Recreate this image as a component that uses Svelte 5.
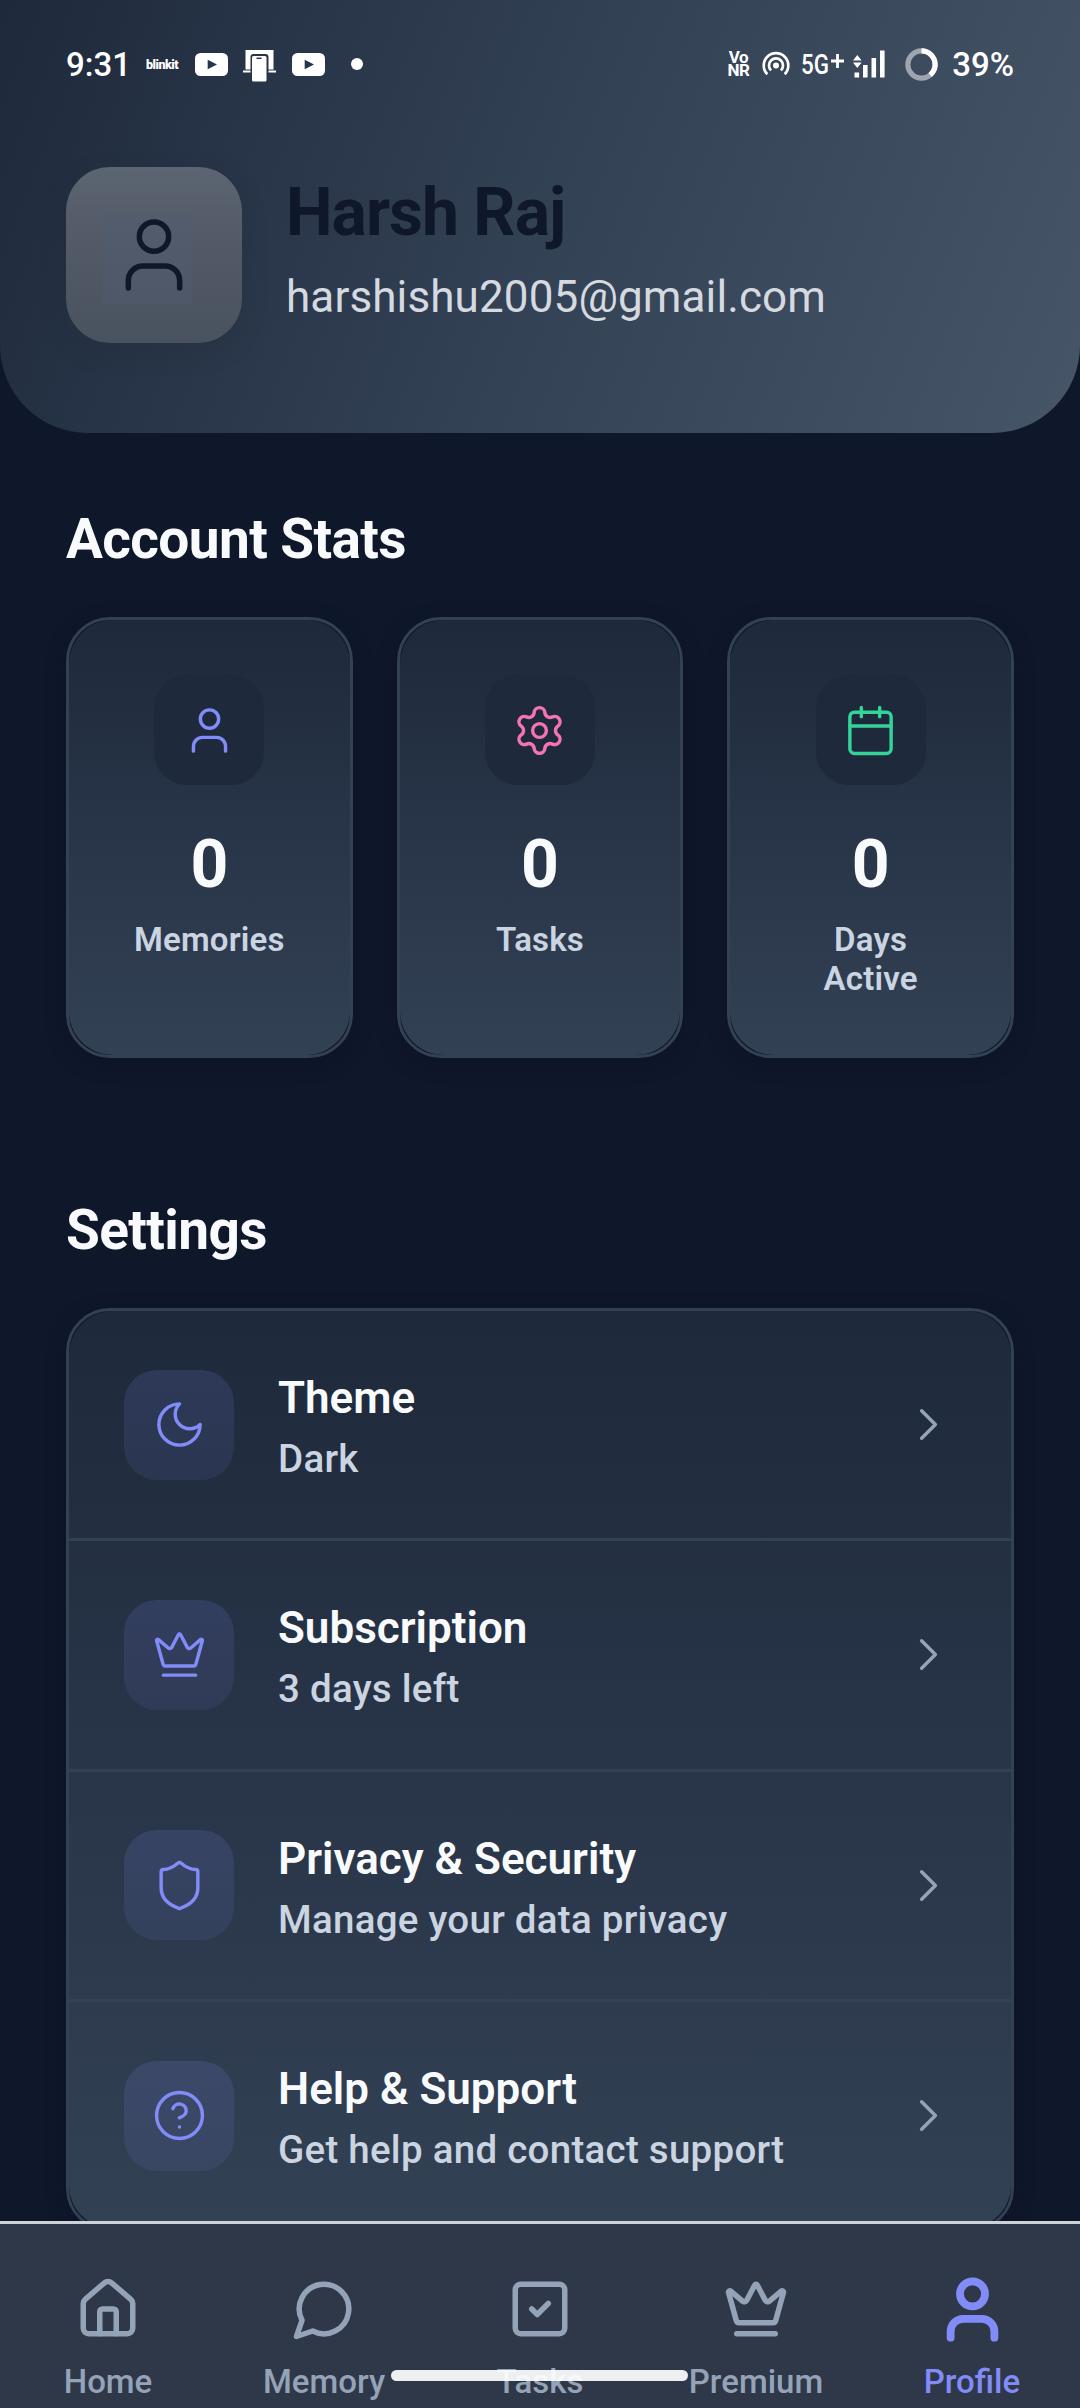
<script>
  const paths = {
    user: '<path d="M19 21v-2a4 4 0 0 0-4-4H9a4 4 0 0 0-4 4v2"/><circle cx="12" cy="7" r="4"/>',
    gear: '<path d="M9.671 4.136a2.34 2.34 0 0 1 4.659 0 2.34 2.34 0 0 0 3.319 1.915 2.34 2.34 0 0 1 2.33 4.033 2.34 2.34 0 0 0 0 3.831 2.34 2.34 0 0 1-2.33 4.033 2.34 2.34 0 0 0-3.319 1.915 2.34 2.34 0 0 1-4.659 0 2.34 2.34 0 0 0-3.32-1.915 2.34 2.34 0 0 1-2.33-4.033 2.34 2.34 0 0 0 0-3.831A2.34 2.34 0 0 1 6.35 6.051a2.34 2.34 0 0 0 3.319-1.915"/><circle cx="12" cy="12" r="3"/>',
    calendar: '<path d="M8 2v4M16 2v4"/><rect width="18" height="18" x="3" y="4" rx="2"/><path d="M3 10h18"/>',
    moon: '<path d="M12 3a6 6 0 0 0 9 9 9 9 0 1 1-9-9Z"/>',
    crown: '<path d="M11.562 3.266a.5.5 0 0 1 .876 0L15.39 8.87a1 1 0 0 0 1.516.294L21.183 5.5a.5.5 0 0 1 .798.519l-2.834 10.246a1 1 0 0 1-.956.734H5.81a1 1 0 0 1-.957-.734L2.02 6.02a.5.5 0 0 1 .798-.519l4.276 3.664a1 1 0 0 0 1.516-.294z"/><path d="M5 21h14"/>',
    shield: '<path d="M20 13c0 5-3.5 7.5-7.66 8.95a1 1 0 0 1-.67-.01C7.5 20.5 4 18 4 13V6a1 1 0 0 1 1-1c2 0 4.5-1.2 6.24-2.72a1.17 1.17 0 0 1 1.52 0C14.51 3.81 17 5 19 5a1 1 0 0 1 1 1z"/>',
    help: '<circle cx="12" cy="12" r="10"/><path d="M9.09 9a3 3 0 0 1 5.83 1c0 2-3 3-3 3"/><path d="M12 17h.01"/>',
    home: '<path d="M15 21v-8a1 1 0 0 0-1-1h-4a1 1 0 0 0-1 1v8"/><path d="M3 10a2 2 0 0 1 .709-1.528l7-5.999a2 2 0 0 1 2.582 0l7 5.999A2 2 0 0 1 21 10v9a2 2 0 0 1-2 2H5a2 2 0 0 1-2-2z"/>',
    message: '<path d="M7.9 20A9 9 0 1 0 4 16.1L2 22Z"/>',
    check: '<rect width="18" height="18" x="3" y="3" rx="2"/><path d="m9 12 2 2 4-4"/>',
    chevron: '<path d="m9 18 6-6-6-6"/>',
  };

  const stats = [
    { icon: 'user', tone: 'indigo', value: 0, label: 'Memories' },
    { icon: 'gear', tone: 'pink', value: 0, label: 'Tasks' },
    { icon: 'calendar', tone: 'green', value: 0, label: 'Days Active' },
  ];

  const settings = [
    { icon: 'moon', title: 'Theme', detail: 'Dark' },
    { icon: 'crown', title: 'Subscription', detail: '3 days left' },
    { icon: 'shield', title: 'Privacy & Security', detail: 'Manage your data privacy' },
    { icon: 'help', title: 'Help & Support', detail: 'Get help and contact support' },
  ];

  const tabs = [
    { icon: 'home', label: 'Home' },
    { icon: 'message', label: 'Memory' },
    { icon: 'check', label: 'Tasks' },
    { icon: 'crown', label: 'Premium' },
    { icon: 'user', label: 'Profile', active: true },
  ];
</script>

{#snippet icon(name, size, stroke)}
  <svg class="icon" width={size} height={size} viewBox="0 0 24 24" stroke-width={stroke}>{@html paths[name]}</svg>
{/snippet}

{#snippet video()}
  <svg width="33" height="23" viewBox="0 0 33 23">
    <rect width="33" height="23" rx="5.5" fill="#fff" />
    <path d="M12.7 6.8v9.4l9.3-4.7z" fill="#27344a" />
  </svg>
{/snippet}

<div class="screen">
  <header>
    <div class="status">
      <div class="status-left">
        <span class="clock">9:31</span>
        <span class="brand">blinkit</span>
        {@render video()}
        <svg class="devices" width="33" height="32" viewBox="0 0 33 32">
          <path d="M2.5 0h28v19.5h-5V7q0-3-3-3h-12q-3 0-3 3v12.500h-5zM0 20.500h7.500v2H0zM25.500 20.500H33v2h-7.500z" fill="#fff" />
          <rect x="9" y="6" width="14.500" height="25.500" rx="1.500" fill="#fff" />
          <path d="M13.500 8.300h5" stroke="#27344a" stroke-width="1.500" />
        </svg>
        {@render video()}
        <i class="dot"></i>
      </div>
      <div class="status-right">
        <span class="vonr"><b>Vo</b><b>NR</b></span>
        <svg class="cast" width="28" height="26" viewBox="0 0 28 26" fill="none" stroke="#fff" stroke-width="2.700">
          <circle cx="14" cy="14.500" r="3" fill="#fff" stroke="none" />
          <path d="M5.300 23.200a12.300 12.300 0 1 1 17.400 0" />
          <path d="M9.100 19.400a7 7 0 1 1 9.800 0" />
        </svg>
        <span class="network">5G</span>
        <svg class="plus" width="13" height="14" viewBox="0 0 13 14" stroke="#fff" stroke-width="2.800">
          <path d="M6.500 0v14M0 7h13" />
        </svg>
        <svg class="signal" width="32" height="28" viewBox="0 0 32 28" fill="#fff">
          <path d="M0 10.500 4.300 5l4.300 5.500zM0 12.500h8.600L4.300 18zM1.500 22.500h4.600v5H1.500zM10 15h4.600v12.500H10zM18.500 8h4.600v19.500h-4.600zM27 .5h4.600v27H27z" />
        </svg>
        <svg class="battery" width="33" height="33" viewBox="0 0 33 33" fill="none" stroke="#fff" stroke-width="5.200">
          <circle cx="16.500" cy="16.500" r="13.600" stroke-opacity=".5" />
          <circle cx="16.500" cy="16.500" r="13.600" pathLength="100" stroke-dasharray="39 61" transform="rotate(-90 16.500 16.500)" />
        </svg>
        <span class="percent">39%</span>
      </div>
    </div>
    <div class="account">
      <div class="avatar">{@render icon('user', 88, 1.5)}</div>
      <div class="who">
        <h1>Harsh Raj</h1>
        <p>harshishu2005@gmail.com</p>
      </div>
    </div>
  </header>

  <main>
    <h2>Account Stats</h2>
    <section class="stats">
      {#each stats as stat}
        <div class="card">
          <div class="fill stat">
            <div class="tile {stat.tone}">{@render icon(stat.icon, 55, 1.5)}</div>
            <strong>{stat.value}</strong>
            <span class="label">{stat.label}</span>
          </div>
        </div>
      {/each}
    </section>

    <h2 class="second">Settings</h2>
    <section class="card">
      <div class="fill">
        {#each settings as row}
          <div class="row">
            <div class="badge">{@render icon(row.icon, 55, 1.5)}</div>
            <div class="copy">
              <h3>{row.title}</h3>
              <p>{row.detail}</p>
            </div>
            <div class="chevron">{@render icon('chevron', 55, 1.5)}</div>
          </div>
        {/each}
      </div>
    </section>
  </main>

  <nav>
    {#each tabs as tab}
      <div class="tab" class:active={tab.active}>
        <div class="glyph">{@render icon(tab.icon, tab.active ? 75 : 66, tab.active ? 2.5 : 2)}</div>
        <span>{tab.label}</span>
      </div>
    {/each}
    <i class="gesture"></i>
  </nav>
</div>

<style>
  :global(body) {
    margin: 0;
    background: #0f172a;
  }
  .screen {
    display: flex;
    flex-direction: column;
    width: 1080px;
    height: 2408px;
    overflow: hidden;
    background: #0f172a;
    color: #f8fafc;
    font-family: Roboto, sans-serif;
  }
  h1, h2, h3, p {
    margin: 0;
  }
  svg {
    display: block;
    flex: none;
  }
  .icon {
    fill: none;
    stroke: currentColor;
    stroke-linecap: round;
    stroke-linejoin: round;
  }

  header {
    flex: none;
    box-sizing: border-box;
    height: 433px;
    padding: 0 66px;
    border-radius: 0 0 88px 88px;
    background: linear-gradient(111.8deg, #1e293b, #334155 50%, #475569);
  }
  .status {
    display: flex;
    justify-content: space-between;
    height: 128px;
    color: #fff;
    font-size: 33px;
    font-weight: 500;
  }
  .status-left, .status-right {
    display: flex;
    align-items: center;
  }
  .clock {
    width: 80px;
  }
  .brand {
    width: 49px;
    font-size: 12.500px;
    font-weight: 900;
    letter-spacing: -.5px;
  }
  .devices {
    margin: 3px 16px 0 15px;
  }
  .dot {
    width: 12px;
    height: 12px;
    margin-left: 26px;
    border-radius: 50%;
    background: #fff;
  }
  .vonr {
    display: flex;
    flex-direction: column;
    align-items: center;
    font-size: 17px;
    line-height: 13.500px;
    letter-spacing: -.6px;
  }
  .cast {
    margin-left: 13px;
  }
  .network {
    width: 30px;
    margin-left: 11px;
    font-size: 28px;
    transform: scaleX(.8);
    transform-origin: left;
  }
  .plus {
    margin-bottom: 7px;
  }
  .signal {
    margin-left: 9px;
  }
  .battery {
    margin: 0 14px 0 20px;
  }

  .account {
    display: flex;
    gap: 44px;
    padding-top: 39px;
  }
  .avatar {
    display: grid;
    place-items: center;
    flex: none;
    width: 176px;
    height: 176px;
    border-radius: 44px;
    color: #0f172a;
    background:
      linear-gradient(rgba(78, 92, 115, .35), rgba(78, 92, 115, .35)) 37px 48px / 89px 89px no-repeat,
      linear-gradient(#5c6572, #555b68 35%, #49525f);
    box-shadow: 0 8px 22px rgba(38, 46, 60, .35);
  }
  h1 {
    margin-top: 7px;
    color: #0f172a;
    font-size: 66px;
    font-weight: 700;
    line-height: 77px;
    letter-spacing: -1px;
  }
  .who p {
    margin-top: 20px;
    color: #d5dae0;
    font-size: 44px;
    line-height: 52px;
    letter-spacing: .12px;
  }

  main {
    padding: 0 66px;
  }
  h2 {
    margin-top: 74px;
    font-size: 55px;
    font-weight: 700;
    line-height: 65px;
    letter-spacing: -.63px;
  }
  h2.second {
    margin-top: 140px;
  }
  .card {
    margin-top: 45px;
    border: 3px solid #334155;
    border-radius: 44px;
    box-shadow: 0 6px 18px rgba(14, 18, 38, .5);
  }
  .fill {
    height: 100%;
    border-radius: 44px;
    background: linear-gradient(#1e293b, #334155);
  }
  .stats {
    display: grid;
    grid-template-columns: repeat(3, 1fr);
    gap: 44px;
  }
  .stats .card {
    height: 435px;
  }
  .stat {
    display: flex;
    flex-direction: column;
    align-items: center;
    box-sizing: border-box;
    padding: 55px 55px 0;
  }
  .tile, .badge {
    display: grid;
    place-items: center;
    flex: none;
    width: 110px;
    height: 110px;
    border-radius: 33px;
  }
  .tile {
    background: #1e293b;
  }
  .indigo {
    color: #818cf8;
  }
  .pink {
    color: #f472b6;
  }
  .green {
    color: #34d399;
  }
  .stat strong {
    margin-top: 41px;
    font-size: 66px;
    font-weight: 700;
    line-height: 77px;
  }
  .label {
    margin-top: 17px;
    color: #cbd5e1;
    font-size: 33px;
    font-weight: 600;
    line-height: 39px;
    letter-spacing: .2px;
    text-align: center;
  }

  .row {
    display: flex;
    align-items: center;
    box-sizing: border-box;
    height: 230.300px;
    padding: 0 55px;
    border-bottom: 3px solid #334155;
  }
  .row:last-child {
    height: 227.300px;
    border-bottom: 0;
  }
  .badge {
    color: #818cf8;
    background: linear-gradient(rgba(129, 140, 248, .15), rgba(129, 140, 248, .09));
  }
  .copy {
    flex: 1;
    margin-left: 44px;
    padding-top: 5px;
  }
  h3 {
    font-size: 44px;
    font-weight: 600;
    line-height: 52px;
  }
  .copy p {
    margin-top: 11px;
    color: #cbd5e1;
    font-size: 38.500px;
    font-weight: 500;
    line-height: 47px;
    letter-spacing: .27px;
  }
  .chevron {
    color: #94a3b8;
  }

  nav {
    position: absolute;
    top: 2221px;
    left: 0;
    display: grid;
    grid-template-columns: repeat(5, 1fr);
    box-sizing: border-box;
    width: 1080px;
    height: 187px;
    overflow: hidden;
    border-top: 3px solid #ccd2d6;
    background: #2f3848;
  }
  .tab {
    display: flex;
    flex-direction: column;
    align-items: center;
    padding-top: 47px;
    color: #94a3b8;
    font-size: 33px;
    font-weight: 500;
  }
  .tab.active {
    color: #818cf8;
  }
  .glyph {
    display: grid;
    place-items: center;
    height: 76px;
  }
  .tab span {
    margin-top: 15px;
    line-height: 39px;
  }
  .gesture {
    position: absolute;
    top: 146px;
    left: 391px;
    width: 297px;
    height: 11px;
    border-radius: 6px;
    background: rgba(255, 255, 255, .92);
  }
</style>
